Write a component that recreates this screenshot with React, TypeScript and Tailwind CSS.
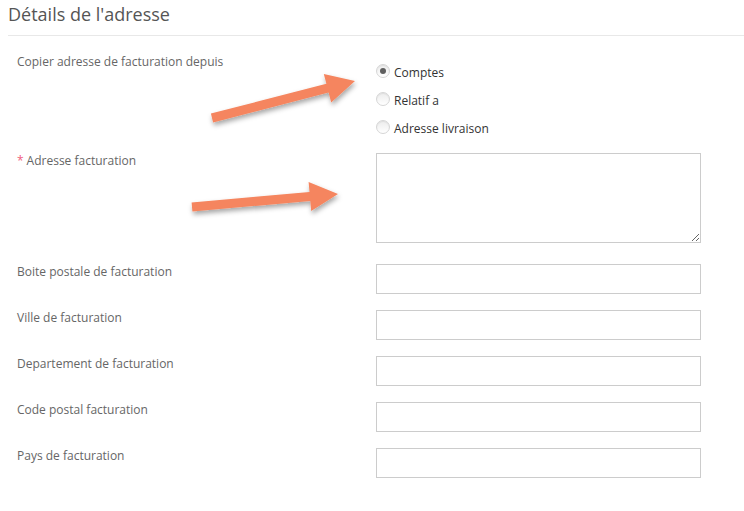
const fieldLabels = [
  'Boite postale de facturation',
  'Ville de facturation',
  'Departement de facturation',
  'Code postal facturation',
  'Pays de facturation',
];

const copyOptions = [
  { label: 'Comptes', checked: true },
  { label: 'Relatif a', checked: false },
  { label: 'Adresse livraison', checked: false },
];

const Radio = ({ checked }: { checked: boolean }) => (
  <span className="relative -mt-[4px] mr-[4px] flex h-[14px] w-[14px] shrink-0 items-center justify-center rounded-full border border-[#d6d6d6] bg-gradient-to-b from-[#ececec] to-white shadow-[inset_0_1px_1px_rgba(0,0,0,0.06)]">
    {checked && <span className="h-[6px] w-[6px] rounded-full bg-[#5f5f5f]" />}
  </span>
);

const Arrows = () => (
  <svg
    className="pointer-events-none absolute left-0 top-0"
    width="744"
    height="511"
    viewBox="0 0 744 511"
  >
    <defs>
      <filter id="shadow" x="-20%" y="-50%" width="140%" height="200%">
        <feDropShadow dx="1" dy="3" stdDeviation="2.5" floodColor="#000" floodOpacity="0.35" />
      </filter>
    </defs>
    <polygon
      filter="url(#shadow)"
      fill="#f5855e"
      points="210.9,113.6 326.4,83.8 323.8,74 355,81 331.2,102.4 328.6,92.6 213.1,122.4"
    />
    <polygon
      filter="url(#shadow)"
      fill="#f5855e"
      points="191.6,202.5 309.5,192 308.6,182 338,194 311.2,211 310.3,201 192.4,211.5"
    />
  </svg>
);

export default function App() {
  return (
    <div className="relative h-[511px] w-[744px] overflow-hidden bg-white font-['Open_Sans',sans-serif]">
      {/* Section header */}
      <div className="ml-[8px] h-[36px] border-b border-[#e8e8e8] pt-[2px]">
        <h2 className="text-[18px] leading-[24px] text-[#555]">Détails de l'adresse</h2>
      </div>

      <div className="pl-[17px]">
        {/* Copy billing address from */}
        <div className="mt-[17px] flex">
          <div className="w-[359px] pt-[1px] text-[12px] leading-[16px] text-[#666]">
            Copier adresse de facturation depuis
          </div>
          <div className="pt-[6px]">
            {copyOptions.map((opt) => (
              <label key={opt.label} className="flex h-[28px] items-center text-[12px] text-[#333]">
                <Radio checked={opt.checked} />
                {opt.label}
              </label>
            ))}
          </div>
        </div>

        {/* Billing address */}
        <div className="mt-[10px] flex">
          <div className="w-[359px] pt-[1px] text-[12px] leading-[14px] text-[#666]">
            <span className="mr-[3px] text-[#f0607e]">*</span>
            Adresse facturation
          </div>
          <textarea className="block h-[90px] w-[325px] border border-[#cccccc] bg-white outline-none" />
        </div>

        <div className="mt-[21px] flex flex-col gap-[16px]">
          {fieldLabels.map((label) => (
            <div key={label} className="flex">
              <div className="w-[359px] pt-[1px] text-[12px] leading-[14px] text-[#666]">{label}</div>
              <input className="block h-[30px] w-[325px] border border-[#cccccc] bg-white outline-none" />
            </div>
          ))}
        </div>
      </div>

      <Arrows />
    </div>
  );
}
